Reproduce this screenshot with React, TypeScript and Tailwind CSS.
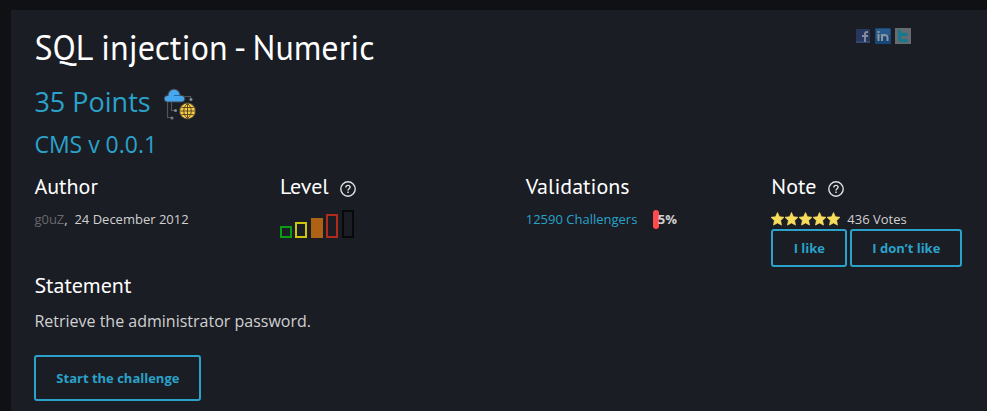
import React from 'react';

const heading = "font-['PT_Sans','Lato',sans-serif] text-white whitespace-nowrap";

function Help() {
  return (
    <svg width="16" height="16" viewBox="0 0 16 16" fill="none" stroke="#dedfe0">
      <circle cx="8" cy="8" r="7.2" strokeWidth="1.4" />
      <path d="M5.900 6.500c0-1.300.9-2.100 2.100-2.100s2.100.8 2.100 1.900c0 1.500-2.100 1.400-2.100 3.100" strokeWidth="1.400" />
      <path d="M8 10.600v1.500" strokeWidth="1.500" />
    </svg>
  );
}

function CloudWeb() {
  return (
    <svg width="34" height="34" viewBox="0 0 34 34" fill="none">
      <path d="M20 9.500h7.500v3M8.500 15v8.500H12M4.500 15v15.500H8" stroke="#50545b" strokeWidth="1.200" />
      <circle cx="28" cy="12.500" r="1.500" fill="#888c93" />
      <circle cx="12.500" cy="23.500" r="1.500" fill="#888c93" />
      <circle cx="9" cy="31" r="1.500" fill="#777b82" />
      <path d="M4.500 14.500a2.700 2.700 0 0 1 0-5.500H5.500a5.500 5.500 0 0 1 11-1.500L17.500 9H18.500a2.700 2.700 0 0 1 0 5.500z" fill="#47a7ee" stroke="#41444a" strokeWidth="2" paintOrder="stroke" />
      <path d="M11 8.500h6" stroke="#1c6cab" />
      <circle cx="24.500" cy="24" r="7.500" fill="#fbca43" stroke="#4a483c" strokeWidth="2" paintOrder="stroke" />
      <path d="M17 24h15M18.500 20.500h12M18.500 27.500h12M24.500 16.500v15M24.500 16.500c-5 4-5 11 0 15c5-4 5-11 0-15" stroke="#4e4321" strokeWidth=".9" />
    </svg>
  );
}

function Stars() {
  return (
    <svg width="70" height="15" viewBox="0 0 70 15" fill="#f8dc5c" stroke="#f8dc5c" strokeWidth=".7" strokeLinejoin="round">
      {[0, 14, 28, 42, 56].map((x) => (
        <path key={x} transform={`translate(${x} 0)`} d="M6.500.5l1.900 4.200 4.600.6-3.400 3.200.9 4.600-4-2.200-4 2.200.9-4.600L0 5.300l4.600-.6z" />
      ))}
    </svg>
  );
}

function Social() {
  return (
    <div className="flex gap-[4px] items-center">
      <svg width="14" height="14" viewBox="0 0 14 14" className="mr-px">
        <path d="M0 0h14v14H0z" fill="#27365c" />
        <path d="M0 12h14v2H0z" fill="#30456f" />
        <path d="M12 3h-1q-2 0-2 2v8M6 7h6" fill="none" stroke="#858c9b" strokeWidth="1.900" />
      </svg>
      <svg width="16" height="16" viewBox="0 0 16 16">
        <rect width="16" height="16" rx="1" fill="#164779" />
        <path d="M1 1h14v6L1 11z" fill="#285a8c" />
        <path d="M3.500 6v7M7 6v7M7 9q0-2 2.500-2T12.500 9v4M3.500 3v2" fill="none" stroke="#8c949f" strokeWidth="2" />
      </svg>
      <svg width="16" height="16" viewBox="0 0 16 16">
        <path d="M0 0h16v16H0z" fill="#656b70" />
        <path d="M4.500 3v7q0 2.700 3 2.700h4M4.500 6.300h7" fill="none" stroke="#15788c" strokeWidth="3.200" strokeLinecap="round" strokeLinejoin="round" />
      </svg>
    </div>
  );
}

const button = "border-2 border-[#2aa2ca] rounded-[3px] text-[#2aa2ca] font-bold text-[13px] leading-none flex items-center justify-center whitespace-nowrap";

export default function App() {
  return (
    <div className="h-[411px] w-[987px] overflow-hidden bg-[#101114] pt-[10px] pl-[11px] font-['Open_Sans',sans-serif] text-[13px] text-[#d0d0d1]">
      <main className="h-[401px] bg-[#1a1d24] pl-[23.400px] overflow-hidden">
        <div className="flex h-[74px] justify-between pr-[76px]">
          <h1 className={`${heading} text-[34px] leading-[42px] pt-[16px] tracking-[0.01px]`}>SQL injection - Numeric</h1>
          <div className="pt-[18px]"><Social /></div>
        </div>
        <div className="flex h-[38px] text-[#2aa2ca]">
          <h2 className="text-[27px] leading-[36px] w-[129px] whitespace-nowrap">35 Points</h2>
          <div className="pt-[3px]"><CloudWeb /></div>
        </div>
        <h3 className="text-[23px] leading-[32px] h-[50px] pt-[6px] text-[#2aa2ca] whitespace-nowrap">CMS v 0.0.1</h3>
        <div className="grid grid-cols-[repeat(4,245.670px)] h-[99px]">
          <section>
            <h4 className={`${heading} text-[22px] leading-[28px] h-[38px]`}>Author</h4>
            <p className="leading-[18px]"><span className="text-[#69696b]">g0uZ</span>,&nbsp; 24 December 2012</p>
          </section>
          <section>
            <div className="flex h-[38px] gap-[11px]">
              <h4 className={`${heading} text-[22px] leading-[28px] w-[49px]`}>Level</h4>
              <div className="pt-[9px]"><Help /></div>
            </div>
            <div className="flex items-end gap-[3px] h-[28px]">
              <i className="w-[12px] h-[12px] border-2 border-[#0c9c14]" />
              <i className="w-[12px] h-[16px] border-2 border-[#cdc50c]" />
              <i className="w-[12px] h-[20px] bg-[#ae6214] ml-[1px]" />
              <i className="w-[12px] h-[24px] border-2 border-[#b12a1b]" />
              <i className="w-[12px] h-[28px] border-2 border-[#08090b] ml-[1px]" />
            </div>
          </section>
          <section>
            <h4 className={`${heading} text-[22px] leading-[28px] h-[38px]`}>Validations</h4>
            <div className="flex leading-[18px]">
              <span className="w-[127px] text-[#2aa2ca]">12590 Challengers</span>
              <i className="h-[19px] w-[6px] rounded-[3px] bg-[#ff4b4b]" />
              <b className="ml-[-1px]">5%</b>
            </div>
          </section>
          <section>
            <div className="flex h-[38px] gap-[12px]">
              <h4 className={`${heading} text-[22px] leading-[28px] w-[45px]`}>Note</h4>
              <div className="pt-[9px]"><Help /></div>
            </div>
            <div className="flex h-[19px]">
              <div className="pt-[2px] w-[76px]"><Stars /></div>
              <span className="leading-[18px]">436 Votes</span>
            </div>
            <div className="flex gap-[3px]">
              <button className={`${button} w-[76px] h-[38px]`}>I like</button>
              <button className={`${button} w-[112px] h-[38px]`}>I don’t like</button>
            </div>
          </section>
        </div>
        <h4 className={`${heading} text-[22px] leading-[28px] h-[37px]`}>Statement</h4>
        <p className="text-[16px] leading-[26px] h-[47px] whitespace-nowrap">Retrieve the administrator password.</p>
        <button className={`${button} w-[167px] h-[46px]`}>Start the challenge</button>
      </main>
    </div>
  );
}
